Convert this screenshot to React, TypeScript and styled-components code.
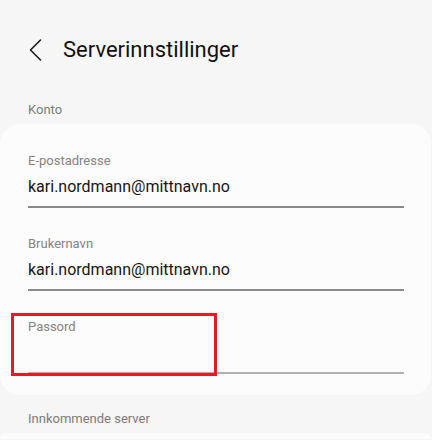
import React from "react";
import styled, { createGlobalStyle } from "styled-components";

const Global = createGlobalStyle`
  html, body { margin: 0; padding: 0; background: #f6f6f6; overflow: hidden; }
  body { font-family: Roboto, "Noto Sans", sans-serif; -webkit-font-smoothing: antialiased; }
`;

const Page = styled.div`
  width: 432px;
  height: 440px;
  overflow: hidden;
  background: #f6f6f6;
  display: flex;
  flex-direction: column;
  & > * { flex-shrink: 0; }
`;

const Header = styled.div`
  height: 100px;
  display: flex;
  align-items: center;
  padding-left: 29px;
  box-sizing: border-box;
`;

const Back = styled.svg`
  width: 13px;
  height: 22px;
  flex: none;
`;

const Title = styled.h1`
  margin: 0 0 0 21px;
  font-size: 22px;
  font-weight: 400;
  color: #111;
  line-height: 24px;
`;

const SectionLabel = styled.div<{ $top: number; $height: number }>`
  padding: ${(p) => p.$top}px 0 0 28px;
  box-sizing: border-box;
  font-size: 13px;
  line-height: 20px;
  height: ${(p) => p.$height}px;
  color: #7c7c7c;
`;

const Card = styled.div`
  background: #fcfcfc;
  border-radius: 20px;
  padding: 1px 27px 21px 28px;
  margin-right: 1px;
  display: flex;
  flex-direction: column;
`;

const Field = styled.div`
  position: relative;
  display: flex;
  flex-direction: column;
  padding-top: 28px;
  height: 83px;
  box-sizing: border-box;
`;

const Label = styled.div`
  font-size: 13px;
  line-height: 16px;
  height: 16px;
  color: #838383;
`;

const Value = styled.div`
  font-size: 16px;
  line-height: 22px;
  height: 22px;
  margin-top: 7px;
  color: #151515;
`;

const Underline = styled.div<{ $light?: boolean }>`
  margin-top: auto;
  height: 2px;
  background: ${(p) => (p.$light ? "#b0b0b0" : "#8a8a8a")};
`;

const Highlight = styled.div`
  position: absolute;
  left: -17px;
  top: 22px;
  width: 206px;
  height: 63px;
  box-sizing: border-box;
  border: 3px solid #e31b23;
`;

const NextCard = styled.div`
  background: #fcfcfc;
  border-radius: 20px 20px 0 0;
  height: 6px;
  margin-right: 1px;
`;

export default function App() {
  return (
    <>
      <Global />
      <Page>
        <Header>
          <Back viewBox="0 0 13 22" fill="none">
            <path d="M11.5 1 L1.5 11 L11.5 21" stroke="#1a1a1a" strokeWidth="1.6" strokeLinecap="round" strokeLinejoin="round" />
          </Back>
          <Title>Serverinnstillinger</Title>
        </Header>
        <SectionLabel $top={0} $height={24}>Konto</SectionLabel>
        <Card>
          <Field>
            <Label>E-postadresse</Label>
            <Value>kari.nordmann@mittnavn.no</Value>
            <Underline />
          </Field>
          <Field>
            <Label>Brukernavn</Label>
            <Value>kari.nordmann@mittnavn.no</Value>
            <Underline />
          </Field>
          <Field>
            <Label>Passord</Label>
            <Value />
            <Underline $light />
            <Highlight />
          </Field>
        </Card>
        <SectionLabel $top={14} $height={38}>Innkommende server</SectionLabel>
        <NextCard />
      </Page>
    </>
  );
}
